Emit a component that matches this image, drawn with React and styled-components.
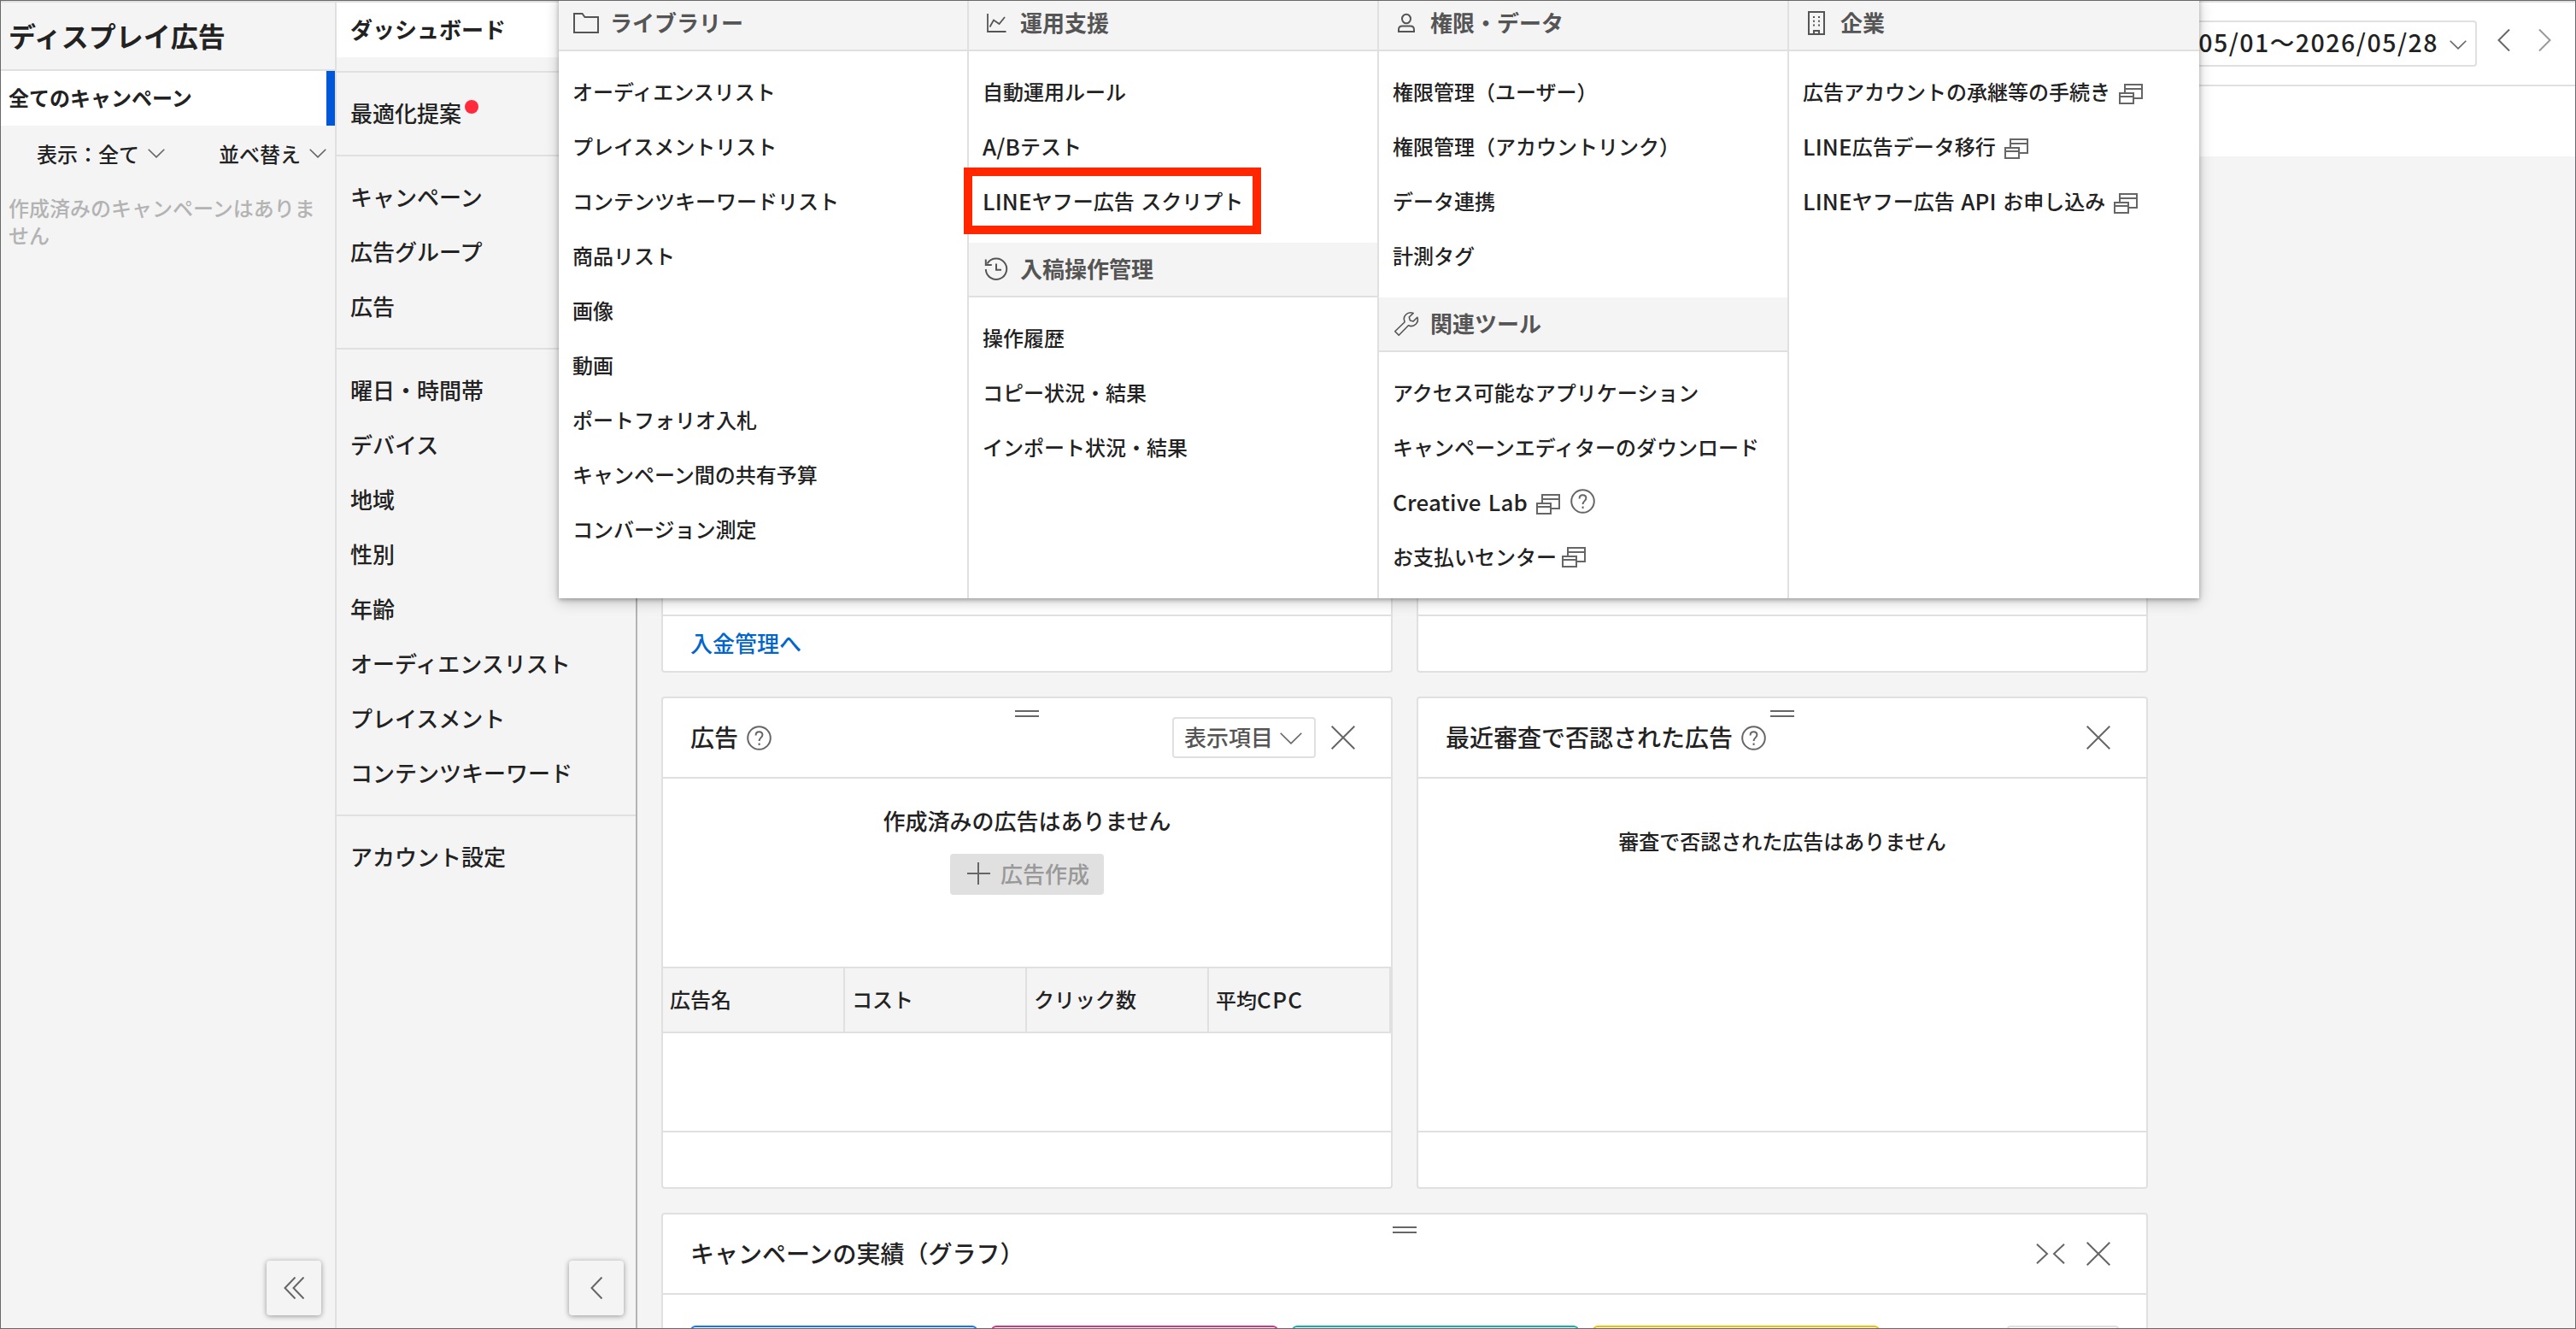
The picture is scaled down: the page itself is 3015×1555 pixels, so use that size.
import React from 'react'
import styled, { createGlobalStyle, css } from 'styled-components';

const GlobalStyle = createGlobalStyle`
  *, *::after {
    box-sizing: border-box;
  }
  body {
    margin: 0;
    color: #222;
    font-family: "Noto Sans CJK JP", sans-serif;
    font-size: 24px;
    font-weight: 500;
  }
`;

const Frame = styled.div`
  position: relative;
  display: flex;
  width: 3015px;
  height: 1555px;
  overflow: hidden;
  border: 1px solid #6b686b;
  background: #f4f4f4;
`;

const column = css`
  display: flex;
  flex-direction: column;
  flex-shrink: 0;
  border-top: 2px solid #e0e0e0;

  > * {
    flex-shrink: 0;
  }
`;

const Icon = styled.svg`
  display: block;
  flex-shrink: 0;
  fill: none;
  stroke: ${(props) => props.$color || '#666'};
  stroke-width: ${(props) => props.$stroke || 2};
`;

/* campaign tree */
const Sidebar = styled.aside`
  ${column}
  width: 393px;
  border-right: 2px solid #e0e0e0;
`;

const SidebarTitle = styled.h1`
  margin: 0;
  height: 80px;
  padding: 0 9px;
  border-bottom: 2px solid #e0e0e0;
  font-size: 32px;
  font-weight: 700;
  line-height: 76px;
`;

const CurrentCampaign = styled.div`
  height: 64px;
  padding-left: 9px;
  border-right: 10px solid #0057d8;
  background: #fff;
  font-weight: 700;
  line-height: 61px;
`;

const Filters = styled.div`
  display: flex;
  justify-content: space-between;
  align-items: center;
  height: 68px;
  padding: 0 10px 4px 42px;
`;

const Filter = styled.span`
  display: flex;
  align-items: center;
  gap: 10px;
`;

const NoCampaign = styled.p`
  margin: 12px 0 0;
  padding: 0 9px;
  color: #b3b3b3;
  line-height: 32px;
  word-break: break-all;
`;

const CollapseButton = styled.button`
  display: flex;
  align-items: center;
  justify-content: center;
  width: 64px;
  height: 64px;
  margin: auto ${(props) => props.$right}px 15px auto;
  padding: 0;
  border: 0;
  border-radius: 4px;
  background: #f4f4f4;
  box-shadow: 0 1px 6px rgba(0, 0, 0, 0.4);
`;

/* page navigation */
const Nav = styled.nav`
  ${column}
  width: 352px;
  border-right: 2px solid #b3b3b3;
  font-size: 26px;
`;

const NavGroup = styled.div`
  padding: ${(props) => (props.$first ? '0 0 16px' : '16px 0')};
  border-bottom: ${(props) => (props.$last ? 0 : '2px solid #e0e0e0')};
`;

const NavItem = styled.div`
  display: flex;
  align-items: center;
  height: 64px;
  padding: 0 0 4px 16px;
  background: ${(props) => (props.$active ? '#fff' : 'transparent')};
  font-weight: ${(props) => (props.$active ? 700 : 500)};
`;

const Dot = styled.i`
  width: 16px;
  height: 16px;
  margin: -12px 0 0 4px;
  border-radius: 50%;
  background: #ff2b3d;
`;

/* dashboard */
const Main = styled.main`
  ${column}
  flex: 1;
`;

const TopBar = styled.div`
  display: flex;
  justify-content: flex-end;
  align-items: flex-start;
  height: 98px;
  padding: 21px 28px 0 0;
  border-bottom: 2px solid #e0e0e0;
  background: #fff;
`;

const DateRange = styled.div`
  display: flex;
  align-items: center;
  justify-content: flex-end;
  width: 440px;
  height: 54px;
  margin-right: 24px;
  padding: 0 10px 6px 0;
  border: 2px solid #e0e0e0;
  border-radius: 4px;
  font-size: 28.5px;
  letter-spacing: 1.5px;

  svg {
    margin: 8px 0 0 13px;
  }
`;

const Pager = styled.div`
  display: flex;
  gap: 33px;
  padding-top: 10px;
`;

const SubBar = styled.div`
  height: 82px;
  background: #fff;
`;

const Board = styled.div`
  display: grid;
  grid-template-columns: 856px 856px;
  grid-template-rows: 576px 576px 576px;
  gap: 28px;
  padding: 28px;
`;

const Card = styled.section`
  display: flex;
  flex-direction: column;
  grid-column: ${(props) => (props.$wide ? 'span 2' : 'auto')};
  border: 2px solid #e0e0e0;
  border-radius: 4px;
  background: #fff;
`;

const CardHeader = styled.header`
  position: relative;
  display: flex;
  align-items: center;
  height: 94px;
  padding: 0 42px 0 32px;
  border-bottom: 2px solid #e0e0e0;
`;

const CardTitle = styled.h2`
  display: flex;
  align-items: center;
  gap: 10px;
  margin: 0 auto 0 0;
  padding-bottom: 3px;
  font-size: 28px;
  font-weight: 500;

  svg {
    margin-top: 3px;
  }
`;

const Handle = styled.span`
  position: absolute;
  top: 14px;
  left: calc(50% - 14px);
  width: 28px;
  height: 8px;
  border: solid #666;
  border-width: 2px 0;
`;

const ColumnsButton = styled.button`
  display: flex;
  align-items: center;
  justify-content: space-between;
  width: 168px;
  height: 48px;
  margin-right: 18px;
  padding: 0 14px 3px 12px;
  border: 2px solid #e0e0e0;
  border-radius: 4px;
  background: #fff;
  color: #555;
  font: inherit;
  font-size: 26px;

  svg {
    margin-top: 5px;
  }
`;

const CardBody = styled.div`
  display: flex;
  flex: 1;
  flex-direction: column;
  align-items: center;
  padding-top: ${(props) => props.$top || 0}px;
  font-size: ${(props) => props.$size || 24}px;
  line-height: 38px;
`;

const CardFooter = styled.footer`
  display: flex;
  align-items: center;
  height: 66px;
  padding: 0 32px 3px;
  border-top: 2px solid #e0e0e0;
  color: #0066cc;
  font-size: 26px;
`;

const CreateButton = styled.button`
  display: flex;
  align-items: center;
  gap: 12px;
  width: 180px;
  height: 48px;
  margin-top: 20px;
  padding: 0 20px 2px;
  border: 0;
  border-radius: 4px;
  background: #e0e0e0;
  color: #999;
  font: inherit;
  white-space: nowrap;
`;

const TableHead = styled.div`
  display: grid;
  grid-template-columns: repeat(4, 213px);
  height: 78px;
  margin-top: auto;
  border: solid #e0e0e0;
  border-width: 2px 0;
  background: #f4f4f4;
  font-size: 24px;
  line-height: 72px;
`;

const Cell = styled.div`
  padding-left: 8px;
  border-right: 2px solid #e0e0e0;
`;

const TableBody = styled.div`
  height: 114px;
`;

const Metrics = styled.div`
  display: flex;
  gap: 16px;
  padding: 36px 32px 0;
`;

const Metric = styled.div`
  width: 336px;
  height: 120px;
  border: 2px solid ${(props) => props.$color};
  border-radius: 6px;
`;

const MetricMenu = styled.div`
  width: 131px;
  height: 48px;
  margin-left: auto;
  border: 2px solid #e0e0e0;
  border-radius: 4px;
`;

/* tools menu over the dashboard */
const Menu = styled.div`
  position: absolute;
  top: -5px;
  left: 653px;
  display: grid;
  grid-template-columns: repeat(4, 480px);
  height: 704px;
  background: #fff;
  box-shadow: 0 2px 5px rgba(0, 0, 0, 0.28), 0 4px 16px rgba(0, 0, 0, 0.2);
`;

const MenuColumn = styled.div`
  border-right: 2px solid #e0e0e0;

  &:last-child {
    border-right: 0;
  }
`;

const MenuHeading = styled.h3`
  display: flex;
  align-items: center;
  gap: 12px;
  height: 64px;
  margin: 0;
  padding: 0 0 4px 16px;
  border-bottom: 2px solid #e0e0e0;
  background: #f4f4f4;
  color: #555;
  font-size: 26px;
  font-weight: 700;

  svg {
    margin-top: 4px;
  }
`;

const MenuList = styled.div`
  padding: 16px 0;
`;

const MenuItem = styled.div`
  position: relative;
  display: flex;
  align-items: center;
  height: 64px;
  padding: 0 0 4px 16px;
  white-space: pre;
  word-spacing: 2px;

  ${(props) => props.$marked && css`
    &::after {
      content: '';
      position: absolute;
      z-index: 1;
      top: -8px;
      left: -6px;
      width: 348px;
      height: 78px;
      border: 10px solid #ff2600;
    }
  `}
`;

const Latin = styled.span`
  font-size: 1.08em;
  letter-spacing: ${(props) => (props.$wide ? 1.4 : 0.2)}px;
`;

const Chevron = ({ w = 20, h = 11, ...rest }) => (
  <Icon width={w} height={h} viewBox={`0 0 ${w} ${h}`} $stroke={1.6} {...rest}>
    <path d={`M.7 .7L${w / 2} ${h - 1.2}L${w - 0.7} .7`} />
  </Icon>
)

const Help = () => (
  <Icon width="29" height="29" viewBox="0 0 29 29">
    <circle cx="14.5" cy="14.5" r="13.3" />
    <path d="M10.6 11.4c0-2.6 1.6-4.1 3.9-4.1s3.9 1.4 3.9 3.5c0 3.3-3.8 3.4-3.8 7.2M14.6 20.6v2.4" />
  </Icon>
)

const Close = () => (
  <Icon width="28" height="28" viewBox="0 0 28 28">
    <path d="M.7 .7l26.6 26.6M27.3 .7L.7 27.3" />
  </Icon>
)

const PopupIcon = styled(Icon)`
  margin: ${(props) => (props.$tight ? '4px 0 0 6px' : '8px 12px 0 10px')};
`;

const Popup = ({ tight }) => (
  <PopupIcon width="28" height="24" viewBox="0 0 28 24" $tight={tight}>
    <path d="M7 10V1h20v16h-9M7 6h20M1 11h16v12H1zM1 15h16" />
  </PopupIcon>
)

const FolderIcon = () => (
  <Icon width="32" height="32" viewBox="0 0 32 32" $color="#555">
    <path d="M2 5h9.5l3 4H30v18H2z" />
  </Icon>
)

const ChartIcon = () => (
  <Icon width="32" height="32" viewBox="0 0 32 32" $color="#555">
    <path d="M6 5v21h21.5M8.5 20.5l4.5-8 6.5 4.5L26 9" strokeWidth="1.8" />
  </Icon>
)

const HistoryIcon = () => (
  <Icon width="32" height="32" viewBox="0 0 32 32" $color="#555">
    <path d="M5.5 9.5A12.2 12.2 0 1 1 3.8 16M3.8 4.5V11h7M16 9.5v7.3h6" />
  </Icon>
)

const UserIcon = () => (
  <Icon width="32" height="32" viewBox="0 0 32 32" $color="#555">
    <ellipse cx="16" cy="11" rx="5" ry="5.3" />
    <path d="M7 26v-2.2c0-3 2-4.3 4.3-4.3h9.4c2.3 0 4.3 1.3 4.3 4.3V26z" />
  </Icon>
)

const WrenchIcon = () => (
  <Icon width="32" height="32" viewBox="0 0 32 32" $color="#555" $stroke={1.6}>
    <path d="M24.2 3.4c-3.2-1.2-6.4-.6-8.6 1.6-2.4 2.4-2.9 5.7-1.5 8.7L2.7 24.8l4.5 4.5 11.3-11.5c3 1.3 6.3.8 8.6-1.5 2.2-2.2 2.8-5.2 1.8-8l-4.7 4.6-3.9-1-1-3.9z" strokeLinejoin="round" />
  </Icon>
)

const BuildingIcon = () => (
  <Icon width="32" height="32" viewBox="0 0 32 32" $color="#555">
    <path d="M7 3h18v26H7zM13 29v-4h6v4" />
    <path d="M13 8v13M19 8v13" strokeDasharray="2 2.7" />
  </Icon>
)

const navGroups = [
  ['ダッシュボード'],
  ['最適化提案'],
  ['キャンペーン', '広告グループ', '広告'],
  ['曜日・時間帯', 'デバイス', '地域', '性別', '年齢', 'オーディエンスリスト', 'プレイスメント', 'コンテンツキーワード'],
  ['アカウント設定'],
]

const tableColumns = ['広告名', 'コスト', 'クリック数']

const metricColors = ['#0f78fa', '#d63384', '#10b1ab', '#eac100']

export const ToolsMenu = () => (
  <Menu>
    <MenuColumn>
      <MenuHeading><FolderIcon />ライブラリー</MenuHeading>
      <MenuList>
        <MenuItem>オーディエンスリスト</MenuItem>
        <MenuItem>プレイスメントリスト</MenuItem>
        <MenuItem>コンテンツキーワードリスト</MenuItem>
        <MenuItem>商品リスト</MenuItem>
        <MenuItem>画像</MenuItem>
        <MenuItem>動画</MenuItem>
        <MenuItem>ポートフォリオ入札</MenuItem>
        <MenuItem>キャンペーン間の共有予算</MenuItem>
        <MenuItem>コンバージョン測定</MenuItem>
      </MenuList>
    </MenuColumn>

    <MenuColumn>
      <MenuHeading><ChartIcon />運用支援</MenuHeading>
      <MenuList>
        <MenuItem>自動運用ルール</MenuItem>
        <MenuItem><Latin>A/B</Latin>テスト</MenuItem>
        <MenuItem $marked><Latin>LINE</Latin>ヤフー広告 スクリプト</MenuItem>
      </MenuList>
      <MenuHeading><HistoryIcon />入稿操作管理</MenuHeading>
      <MenuList>
        <MenuItem>操作履歴</MenuItem>
        <MenuItem>コピー状況・結果</MenuItem>
        <MenuItem>インポート状況・結果</MenuItem>
      </MenuList>
    </MenuColumn>

    <MenuColumn>
      <MenuHeading><UserIcon />権限・データ</MenuHeading>
      <MenuList>
        <MenuItem>権限管理（ユーザー）</MenuItem>
        <MenuItem>権限管理（アカウントリンク）</MenuItem>
        <MenuItem>データ連携</MenuItem>
        <MenuItem>計測タグ</MenuItem>
      </MenuList>
      <MenuHeading><WrenchIcon />関連ツール</MenuHeading>
      <MenuList>
        <MenuItem>アクセス可能なアプリケーション</MenuItem>
        <MenuItem>キャンペーンエディターのダウンロード</MenuItem>
        <MenuItem><Latin>Creative Lab</Latin><Popup /><Help /></MenuItem>
        <MenuItem>お支払いセンター<Popup tight /></MenuItem>
      </MenuList>
    </MenuColumn>

    <MenuColumn>
      <MenuHeading><BuildingIcon />企業</MenuHeading>
      <MenuList>
        <MenuItem>広告アカウントの承継等の手続き<Popup /></MenuItem>
        <MenuItem><Latin>LINE</Latin>広告データ移行<Popup /></MenuItem>
        <MenuItem><Latin>LINE</Latin>ヤフー広告 <Latin>API</Latin> お申し込み<Popup /></MenuItem>
      </MenuList>
    </MenuColumn>
  </Menu>
)

const App = () => (
  <>
    <GlobalStyle />
    <Frame>
      <Sidebar>
        <SidebarTitle>ディスプレイ広告</SidebarTitle>
        <CurrentCampaign>全てのキャンペーン</CurrentCampaign>
        <Filters>
          <Filter>表示：全て<Chevron /></Filter>
          <Filter>並べ替え<Chevron /></Filter>
        </Filters>
        <NoCampaign>作成済みのキャンペーンはありません</NoCampaign>
        <CollapseButton $right={16}>
          <Icon width="24" height="26" viewBox="0 0 24 26">
            <path d="M13.5 .5L1.5 13l12 12.5M23.5 .5l-12 12.5 12 12.5" />
          </Icon>
        </CollapseButton>
      </Sidebar>

      <Nav>
        {navGroups.map((group, i) => (
          <NavGroup key={group[0]} $first={i === 0} $last={i === navGroups.length - 1}>
            {group.map((label) => (
              <NavItem key={label} $active={i === 0}>
                {label}
                {label === '最適化提案' && <Dot />}
              </NavItem>
            ))}
          </NavGroup>
        ))}
        <CollapseButton $right={14}>
          <Icon width="14" height="26" viewBox="0 0 14 26">
            <path d="M13.5 .5L1.5 13l12 12.5" />
          </Icon>
        </CollapseButton>
      </Nav>

      <Main>
        <TopBar>
          <DateRange>2026/05/01〜2026/05/28<Chevron /></DateRange>
          <Pager>
            <Icon width="15" height="26" viewBox="0 0 15 26">
              <path d="M14 .5L1.5 13 14 25.5" />
            </Icon>
            <Icon width="15" height="26" viewBox="0 0 15 26" $color="#999">
              <path d="M1 .5L13.5 13 1 25.5" />
            </Icon>
          </Pager>
        </TopBar>
        <SubBar />
        <Board>
          <Card>
            <CardBody />
            <CardFooter>入金管理へ</CardFooter>
          </Card>
          <Card>
            <CardBody />
            <CardFooter />
          </Card>

          <Card>
            <CardHeader>
              <Handle />
              <CardTitle>広告<Help /></CardTitle>
              <ColumnsButton>表示項目<Chevron w={26} h={14} /></ColumnsButton>
              <Close />
            </CardHeader>
            <CardBody $top={30} $size={26}>
              作成済みの広告はありません
              <CreateButton>
                <Icon width="27" height="26" viewBox="0 0 27 26">
                  <path d="M13 0v26M0 13h27" />
                </Icon>
                広告作成
              </CreateButton>
            </CardBody>
            <TableHead>
              {tableColumns.map((name) => <Cell key={name}>{name}</Cell>)}
              <Cell>平均<Latin $wide>CPC</Latin></Cell>
            </TableHead>
            <TableBody />
            <CardFooter />
          </Card>
          <Card>
            <CardHeader>
              <Handle />
              <CardTitle>最近審査で否認された広告<Help /></CardTitle>
              <Close />
            </CardHeader>
            <CardBody $top={54}>審査で否認された広告はありません</CardBody>
            <CardFooter />
          </Card>

          <Card $wide>
            <CardHeader>
              <Handle />
              <CardTitle>キャンペーンの実績（グラフ）</CardTitle>
              <Icon width="59" height="24" viewBox="0 0 59 24">
                <path d="M1 .7L13 12 1 23.3M33 .7L21 12l12 11.3" />
              </Icon>
              <Close />
            </CardHeader>
            <Metrics>
              {metricColors.map((color) => <Metric key={color} $color={color} />)}
              <MetricMenu />
            </Metrics>
          </Card>
        </Board>
      </Main>

      <ToolsMenu />
    </Frame>
  </>
)

export default App
